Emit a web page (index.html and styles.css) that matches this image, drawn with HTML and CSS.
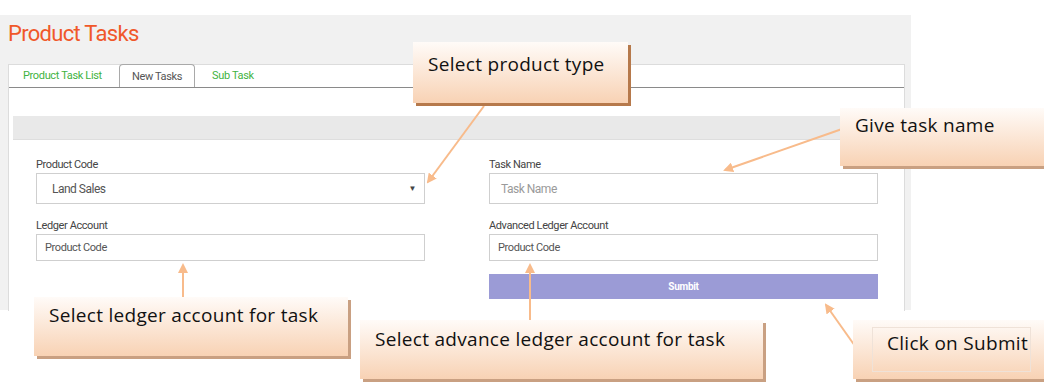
FILE: index.html
```html
<!DOCTYPE html>
<html lang="en">
<head>
  <meta charset="UTF-8" />
  <title>Product Tasks</title>
  <link rel="stylesheet" href="styles.css">
</head>
<body>
  <div class="page">
    <div class="panel">
      <h1 class="title">Product Tasks</h1>

      <div class="card">
        <ul class="tabs">
          <li class="tab tab-list">Product Task List</li>
          <li class="tab tab-new active">New Tasks</li>
          <li class="tab tab-sub">Sub Task</li>
        </ul>

        <div class="card-body">
          <div class="bar"></div>

          <!-- new task form -->
          <form class="task-form">
            <div class="col">
              <div class="field">
                <label>Product Code</label>
                <div class="select">Land Sales <span class="caret">&#9660;</span></div>
              </div>
              <div class="field">
                <label>Ledger Account</label>
                <div class="input">Product Code</div>
              </div>
            </div>
            <div class="col">
              <div class="field">
                <label>Task Name</label>
                <div class="input tall placeholder">Task Name</div>
              </div>
              <div class="field">
                <label>Advanced Ledger Account</label>
                <div class="input">Product Code</div>
              </div>
              <button type="button" class="submit">Sumbit</button>
            </div>
          </form>
        </div>
      </div>
    </div>

    <!-- arrows of the guide -->
    <svg class="arrows" width="1044" height="387" viewBox="0 0 1044 387">
      <defs>
        <marker id="head" markerWidth="10" markerHeight="10" refX="8" refY="5" orient="auto" markerUnits="userSpaceOnUse">
          <path d="M0,0 L10,5 L0,10 Z" fill="#f8bb8b" />
        </marker>
      </defs>
      <line x1="484" y1="106" x2="428" y2="182" />
      <line x1="842" y1="129" x2="725" y2="170" />
      <line x1="183" y1="297" x2="183" y2="265" />
      <line x1="530" y1="320" x2="530" y2="265" />
      <line x1="855" y1="346" x2="826" y2="305" />
    </svg>

    <div class="callout c-type">Select product type</div>
    <div class="callout c-name">Give task name</div>
    <div class="callout c-ledger">Select ledger account for task</div>
    <div class="callout c-advance">Select advance ledger account for task</div>
    <div class="callout c-submit"><span class="inner">Click on Submit</span></div>
  </div>
</body>
</html>
```

FILE: styles.css
```css
body {
  margin: 0;
  background: #fff;
  font-family: Roboto, 'Liberation Sans', sans-serif;
}

.page {
  position: relative;
  width: 1044px;
  height: 387px;
  overflow: hidden;
  padding-top: 15px;
  box-sizing: border-box;
}

.panel {
  width: 911px;
  height: 295px;
  background: #f1f1f1;
  padding: 0 6px 0 8px;
  box-sizing: border-box;
}

.title {
  margin: 0;
  height: 49px;
  padding-top: 8px;
  box-sizing: border-box;
  font-size: 22px;
  line-height: 22px;
  font-weight: 400;
  letter-spacing: -0.7px;
  color: #f0582a;
}

.card {
  background: #fff;
  border: 1px solid #dcdcdc;
  border-bottom: none;
  height: 246px;
}

.tabs {
  display: flex;
  margin: 0;
  padding: 0;
  list-style: none;
  height: 22px;
  border-bottom: 1px solid #8a8a8a;
}

.tab {
  font-size: 11px;
  line-height: 22px;
  letter-spacing: -0.35px;
  color: #3fb33f;
  box-sizing: border-box;
}

.tab-list {
  width: 110px;
  padding-left: 14px;
}

.tab-new {
  width: 76px;
  text-align: center;
}

.tab-sub {
  padding-left: 17px;
}

.tab.active {
  color: #555;
  border: 1px solid #a9a9a9;
  border-bottom: none;
  border-radius: 4px 4px 0 0;
  margin-top: -1px;
  line-height: 23px;
}

.card-body {
  padding: 28px 0 0 4px;
}

.bar {
  height: 23px;
  background: #e9e9e9;
  border-bottom: 1px solid #dedede;
}

.task-form {
  display: flex;
  gap: 64px;
  padding: 18px 0 0 23px;
}

.col {
  width: 389px;
}

.field {
  margin-bottom: 15px;
}

.field label {
  display: block;
  font-size: 11px;
  line-height: 13px;
  letter-spacing: -0.4px;
  color: #444;
  margin-bottom: 2px;
}

.select,
.input {
  border: 1px solid #cfcfcf;
  box-sizing: border-box;
  color: #555;
  display: flex;
  align-items: center;
}

.select {
  height: 31px;
  padding: 0 8px 0 15px;
  font-size: 12px;
  letter-spacing: -0.5px;
  justify-content: space-between;
}

.caret {
  font-size: 8px;
  color: #444;
}

.input {
  height: 27px;
  padding-left: 8px;
  font-size: 11px;
  letter-spacing: -0.4px;
}

.input.tall {
  height: 31px;
  padding-left: 11px;
  font-size: 12px;
  letter-spacing: -0.5px;
}

.placeholder {
  color: #9a9a9a;
}

.submit {
  display: block;
  width: 100%;
  height: 25px;
  margin-top: -2px;
  border: none;
  background: #9b9bd6;
  color: #fff;
  font-family: Roboto, sans-serif;
  font-size: 10px;
  font-weight: 700;
  letter-spacing: -0.3px;
}

.arrows {
  position: absolute;
  left: 0;
  top: 0;
  pointer-events: none;
}

.arrows line {
  stroke: #f8bb8b;
  stroke-width: 2;
  marker-end: url(#head);
}

.callout {
  position: absolute;
  box-sizing: border-box;
  padding-left: 15px;
  font-family: 'Open Sans', 'Noto Sans', sans-serif;
  font-size: 19px;
  line-height: 22px;
  letter-spacing: 0.3px;
  color: #111;
  white-space: nowrap;
  background: linear-gradient(#fffbf8, #f8d2b4);
  box-shadow: 3px 3px 0 #c9a082;
}

.c-type {
  left: 413px;
  top: 42px;
  width: 215px;
  height: 61px;
  padding-top: 11px;
  box-shadow: 3px 3px 0 #b6794b;
}

.c-name {
  left: 840px;
  top: 108px;
  width: 210px;
  height: 58px;
  padding-top: 6px;
}

.c-ledger {
  left: 34px;
  top: 297px;
  width: 314px;
  height: 59px;
  padding-top: 7px;
}

.c-advance {
  left: 360px;
  top: 320px;
  width: 403px;
  height: 59px;
  padding-top: 8px;
}

.c-submit {
  left: 853px;
  top: 320px;
  width: 195px;
  height: 59px;
  padding: 7px 0 0 19px;
}

.c-submit .inner {
  display: block;
  width: 159px;
  height: 45px;
  box-sizing: border-box;
  padding: 4px 0 0 14px;
  border: 1px solid #efe2d8;
}
```
